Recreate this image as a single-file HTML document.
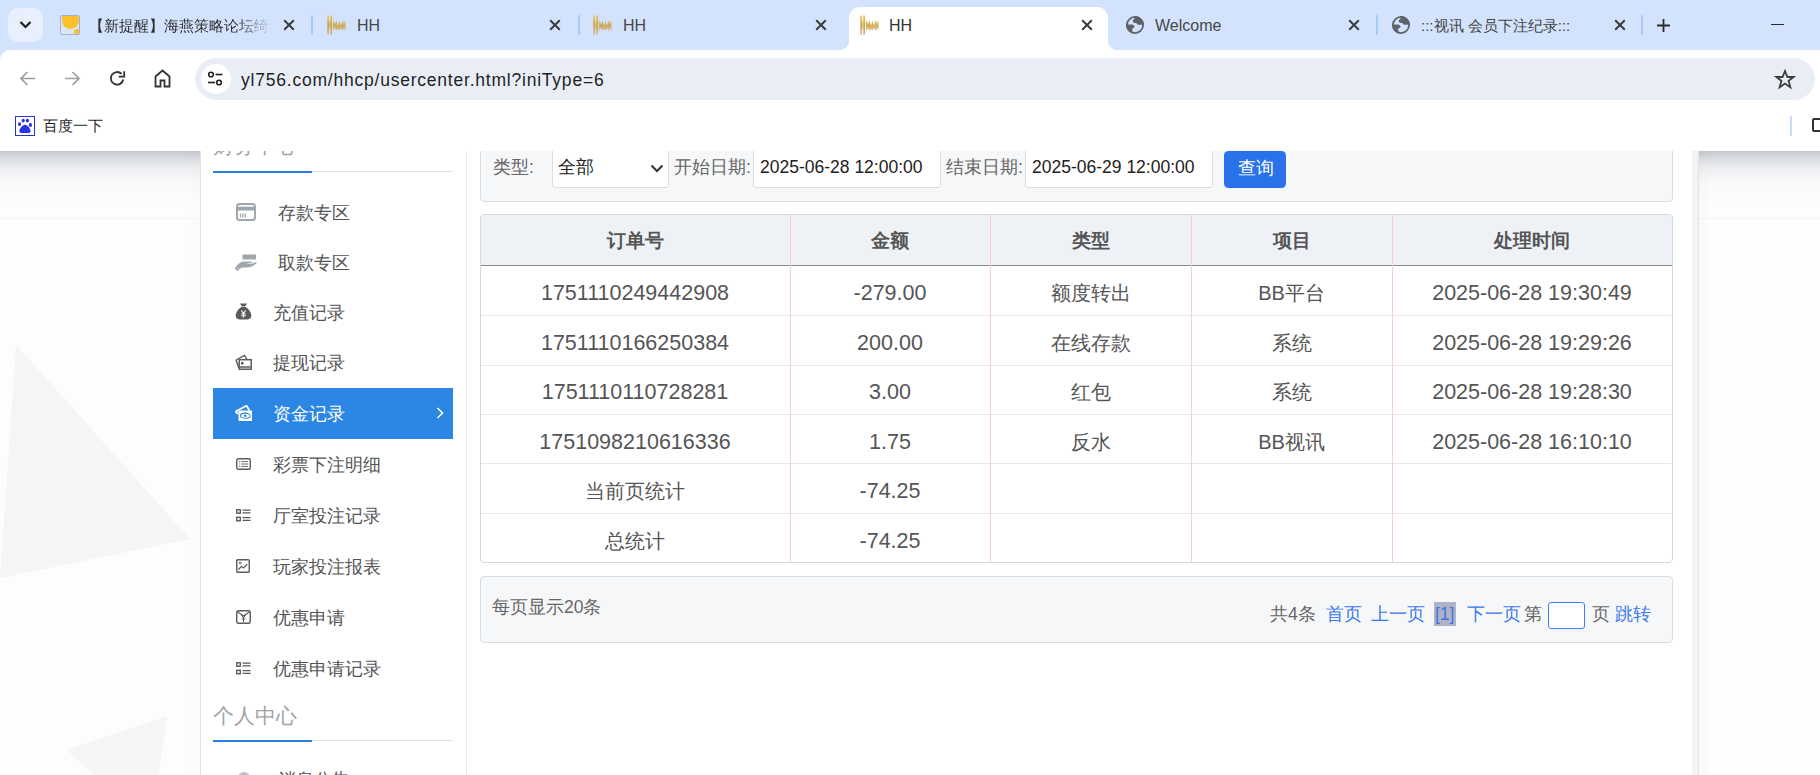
<!DOCTYPE html>
<html><head><meta charset="utf-8">
<style>
*{box-sizing:border-box;margin:0;padding:0}
html,body{width:1820px;height:775px;overflow:hidden;background:#fff;font-family:"Liberation Sans",sans-serif}
.abs{position:absolute}
#tabs{position:absolute;left:0;top:0;width:1820px;height:60px;background:#d3e3fd}
.tsep{position:absolute;top:15px;width:2px;height:20px;background:#a8c7fa;border-radius:1px}
.ttl{position:absolute;top:15.5px;font-size:16px;line-height:20px;color:#474747;white-space:nowrap}
.tx{position:absolute;top:19px;width:12px;height:12px}
#toolbar{position:absolute;left:0;top:50px;width:1820px;height:58px;background:#fff;border-top-left-radius:10px}
#omni{position:absolute;left:195px;top:58px;width:1620px;height:42px;border-radius:21px;background:#e9eef6}
#bm{position:absolute;left:0;top:108px;width:1820px;height:43px;background:#fff}
#page{position:absolute;left:0;top:151px;width:1820px;height:624px;background:#fdfdfd;overflow:hidden}
#main{position:absolute;left:200px;top:0;width:1499px;height:625px;background:#fff;border-left:1px solid #e2e2e2;border-right:1px solid #e2e2e2}
.mi{position:absolute;left:213px;width:240px;height:51px;font-size:17.5px;color:#555}
.mi span{position:absolute;top:0;line-height:51px;white-space:nowrap}
.panel{position:absolute;left:480px;width:1193px;background:#f6f7f9;border:1px solid #d9dde2;border-radius:4px}
.lbl{position:absolute;font-size:17.5px;color:#666;line-height:20px;white-space:nowrap}
.inp{position:absolute;background:#fff;border:1px solid #dadde1;border-radius:3px}
table{border-collapse:collapse}
#tbl{position:absolute;left:480px;top:214px;width:1192px;height:348px;border:1px solid #d6dadf;border-radius:4px;overflow:hidden;background:#fff}
.row{position:absolute;left:0;width:1190px;border-top:1px solid #ebebeb}
.cell{position:absolute;top:0;text-align:center;font-size:20px;color:#555;white-space:nowrap}
.vl{position:absolute;top:0;width:1px;height:348px;background:#f3cfd3}
.lk{color:#3a78e8}
.mt{font-size:17.5px;line-height:22px;color:#555;white-space:nowrap}
.th{position:absolute;text-align:center;font-size:19px;line-height:24px;font-weight:bold;color:#555;white-space:nowrap}
.td{position:absolute;text-align:center;font-size:21.5px;line-height:25px;margin-top:3.5px;color:#555;white-space:nowrap}
.cj{font-size:20px}
</style></head><body>

<!-- TAB STRIP -->
<div id="tabs">
  <div class="abs" style="left:8px;top:8px;width:35px;height:34px;border-radius:10px;background:#e9f0fd"></div>
  <svg class="abs" style="left:19px;top:20px" width="13" height="10" viewBox="0 0 13 10"><path d="M1.5 2 L6.5 7 L11.5 2" fill="none" stroke="#1f1f1f" stroke-width="2.2"/></svg>

  <div class="abs" style="left:60px;top:15px;width:20px;height:20px;border:1px solid #9fb3cf;border-radius:2px;background:#dde6f2;overflow:hidden"><div class="abs" style="left:1px;top:0;width:17px;height:13px;border-radius:0 0 9px 9px;background:#fbc02d"></div><div class="abs" style="left:13px;top:13px;width:6px;height:6px;border-radius:3px;background:#fbc02d"></div></div>
  <div class="ttl" style="left:89px;width:183px;font-size:15px;overflow:hidden;color:#303030;-webkit-mask-image:linear-gradient(90deg,#000 80%,transparent 100%)">【新提醒】海燕策略论坛绮丽</div>
  <svg class="abs" style="left:283px;top:19px" width="12" height="12" viewBox="0 0 12 12"><path d="M1.2 1.2L10.8 10.8M10.8 1.2L1.2 10.8" stroke="#3c3c3c" stroke-width="2"/></svg>
  <div class="tsep" style="left:311px"></div>
  <svg class="abs" style="left:327px;top:15px" width="20" height="20" viewBox="0 0 20 20"><defs><linearGradient id="gw" x1="0" y1="0" x2="0" y2="1"><stop offset="0" stop-color="#e8c766"/><stop offset="0.5" stop-color="#c9a03a"/><stop offset="1" stop-color="#d8b58a"/></linearGradient></defs><g fill="url(#gw)"><rect x="0.3" y="0.5" width="1.6" height="19"/><rect x="3.3" y="0.5" width="1.8" height="19"/><path d="M2 6L3.3 5V15L2 14Z" opacity="0.6"/><path d="M6 4.5L8 9L9.5 5L11 11L12.5 5.5L14 11L15.5 4.5L17 9L18.5 4V16L17 13L15.5 16L14 13L12.5 15.5L11 14L9.5 15.5L8 13L6 16Z" opacity="0.85"/></g></svg>
  <div class="ttl" style="left:357px">HH</div>
  <svg class="abs" style="left:549px;top:19px" width="12" height="12" viewBox="0 0 12 12"><path d="M1.2 1.2L10.8 10.8M10.8 1.2L1.2 10.8" stroke="#3c3c3c" stroke-width="2"/></svg>
  <div class="tsep" style="left:578px"></div>
  <svg class="abs" style="left:593px;top:15px" width="20" height="20" viewBox="0 0 20 20"><defs><linearGradient id="gw" x1="0" y1="0" x2="0" y2="1"><stop offset="0" stop-color="#e8c766"/><stop offset="0.5" stop-color="#c9a03a"/><stop offset="1" stop-color="#d8b58a"/></linearGradient></defs><g fill="url(#gw)"><rect x="0.3" y="0.5" width="1.6" height="19"/><rect x="3.3" y="0.5" width="1.8" height="19"/><path d="M2 6L3.3 5V15L2 14Z" opacity="0.6"/><path d="M6 4.5L8 9L9.5 5L11 11L12.5 5.5L14 11L15.5 4.5L17 9L18.5 4V16L17 13L15.5 16L14 13L12.5 15.5L11 14L9.5 15.5L8 13L6 16Z" opacity="0.85"/></g></svg>
  <div class="ttl" style="left:623px">HH</div>
  <svg class="abs" style="left:815px;top:19px" width="12" height="12" viewBox="0 0 12 12"><path d="M1.2 1.2L10.8 10.8M10.8 1.2L1.2 10.8" stroke="#3c3c3c" stroke-width="2"/></svg>
  <!-- active tab -->
  <div class="abs" style="left:849px;top:7px;width:259px;height:43px;background:#fff;border-radius:11px 11px 0 0"></div>
  <div class="abs" style="left:839px;top:40px;width:10px;height:10px;background:radial-gradient(circle at 0 0,transparent 10px,#fff 10.5px)"></div>
  <div class="abs" style="left:1108px;top:40px;width:10px;height:10px;background:radial-gradient(circle at 100% 0,transparent 10px,#fff 10.5px)"></div>
  <svg class="abs" style="left:860px;top:15px" width="20" height="20" viewBox="0 0 20 20"><defs><linearGradient id="gw" x1="0" y1="0" x2="0" y2="1"><stop offset="0" stop-color="#e8c766"/><stop offset="0.5" stop-color="#c9a03a"/><stop offset="1" stop-color="#d8b58a"/></linearGradient></defs><g fill="url(#gw)"><rect x="0.3" y="0.5" width="1.6" height="19"/><rect x="3.3" y="0.5" width="1.8" height="19"/><path d="M2 6L3.3 5V15L2 14Z" opacity="0.6"/><path d="M6 4.5L8 9L9.5 5L11 11L12.5 5.5L14 11L15.5 4.5L17 9L18.5 4V16L17 13L15.5 16L14 13L12.5 15.5L11 14L9.5 15.5L8 13L6 16Z" opacity="0.85"/></g></svg>
  <div class="ttl" style="left:889px;color:#333">HH</div>
  <svg class="abs" style="left:1081px;top:19px" width="12" height="12" viewBox="0 0 12 12"><path d="M1.2 1.2L10.8 10.8M10.8 1.2L1.2 10.8" stroke="#3c3c3c" stroke-width="2"/></svg>
  <svg class="abs" style="left:1125px;top:15px" width="20" height="20" viewBox="0 0 20 20"><circle cx="10" cy="10" r="8.1" fill="none" stroke="#5f6368" stroke-width="1.8"/><path d="M9.5 1.1A9 9 0 0 1 18.9 9.2L16 9.7L13 9.7L11.5 8.2L8.2 7.5L7.6 5.5L9.5 3.5Z" fill="#5f6368"/><path d="M1.05 9.5A9 9 0 0 0 7.8 18.75L7.3 16L7.3 13.5L9.3 12.5L9.5 11L7.5 9.6Z" fill="#5f6368"/></svg>
  <div class="ttl" style="left:1155px">Welcome</div>
  <svg class="abs" style="left:1348px;top:19px" width="12" height="12" viewBox="0 0 12 12"><path d="M1.2 1.2L10.8 10.8M10.8 1.2L1.2 10.8" stroke="#3c3c3c" stroke-width="2"/></svg>
  <div class="tsep" style="left:1376px"></div>
  <svg class="abs" style="left:1391px;top:15px" width="20" height="20" viewBox="0 0 20 20"><circle cx="10" cy="10" r="8.1" fill="none" stroke="#5f6368" stroke-width="1.8"/><path d="M9.5 1.1A9 9 0 0 1 18.9 9.2L16 9.7L13 9.7L11.5 8.2L8.2 7.5L7.6 5.5L9.5 3.5Z" fill="#5f6368"/><path d="M1.05 9.5A9 9 0 0 0 7.8 18.75L7.3 16L7.3 13.5L9.3 12.5L9.5 11L7.5 9.6Z" fill="#5f6368"/></svg>
  <div class="ttl" style="left:1421px;font-size:15px;color:#444">:::视讯 会员下注纪录:::</div>
  <svg class="abs" style="left:1614px;top:19px" width="12" height="12" viewBox="0 0 12 12"><path d="M1.2 1.2L10.8 10.8M10.8 1.2L1.2 10.8" stroke="#3c3c3c" stroke-width="2"/></svg>
  <div class="tsep" style="left:1641px"></div>
  <svg class="abs" style="left:1656px;top:18px" width="15" height="15" viewBox="0 0 15 15"><path d="M7.5 1V14M1 7.5H14" stroke="#2a2a2a" stroke-width="1.8"/></svg>
  <div class="abs" style="left:1771px;top:24px;width:13px;height:1.3px;background:#2a2a2a"></div>
</div>

<!-- TOOLBAR -->
<div id="toolbar"></div>
<svg class="abs" style="left:19px;top:70px" width="17" height="17" viewBox="0 0 17 17"><path d="M16 8.5H2M8.5 2L2 8.5L8.5 15" fill="none" stroke="#9e9e9e" stroke-width="1.7"/></svg>
<svg class="abs" style="left:64px;top:70px" width="17" height="17" viewBox="0 0 17 17"><path d="M1 8.5H15M8.5 2L15 8.5L8.5 15" fill="none" stroke="#9e9e9e" stroke-width="1.7"/></svg>
<svg class="abs" style="left:109px;top:70px" width="17" height="17" viewBox="0 0 17 17"><path d="M14.3 9.5A6.3 6.3 0 1 1 12.6 3.9" fill="none" stroke="#333" stroke-width="1.8"/><path d="M15.2 1.2V6.6H9.8" fill="none" stroke="#333" stroke-width="1.8"/></svg>
<svg class="abs" style="left:154px;top:69px" width="17" height="19" viewBox="0 0 17 19"><path d="M1.5 17.5V7.5L8.5 1.5L15.5 7.5V17.5H10.5V11.5H6.5V17.5Z" fill="none" stroke="#333" stroke-width="1.8" stroke-linejoin="miter"/></svg>
<div id="omni"></div>
<div class="abs" style="left:201px;top:64px;width:30px;height:30px;border-radius:15px;background:#fff"></div>
<svg class="abs" style="left:207px;top:71px" width="18" height="16" viewBox="0 0 18 16"><circle cx="4" cy="3.5" r="2.3" fill="none" stroke="#1f1f1f" stroke-width="1.6"/><path d="M8.5 3.5H15.5" stroke="#1f1f1f" stroke-width="1.6"/><circle cx="12" cy="11.5" r="2.3" fill="none" stroke="#1f1f1f" stroke-width="1.6"/><path d="M1 11.5H8" stroke="#1f1f1f" stroke-width="1.6"/></svg>
<div class="abs" style="left:241px;top:69px;font-size:17.5px;line-height:22px;color:#1f1f1f;letter-spacing:0.78px;white-space:nowrap">yl756.com/hhcp/usercenter.html?iniType=6</div>
<svg class="abs" style="left:1774px;top:69px" width="22" height="21" viewBox="0 0 22 21"><path d="M11 2L13.4 8H19.6L14.6 11.9L16.4 18.4L11 14.6L5.6 18.4L7.4 11.9L2.4 8H8.6Z" fill="none" stroke="#3c3c3c" stroke-width="1.8" stroke-linejoin="miter"/></svg>
<div id="bm"></div>
<div class="abs" style="left:15px;top:116px;width:20px;height:20px;border:1.4px solid #2932e1;background:#fff"></div>
<svg class="abs" style="left:15px;top:116px" width="20" height="20" viewBox="0 0 20 20"><g fill="#2932e1"><ellipse cx="4.6" cy="8.1" rx="1.6" ry="1.9"/><ellipse cx="8.2" cy="4.6" rx="1.6" ry="1.9"/><ellipse cx="12.4" cy="4.6" rx="1.6" ry="1.9"/><ellipse cx="15.4" cy="9" rx="1.6" ry="1.9"/><path d="M10 8.8C12.5 8.8 16 13 15.6 15.6C15.2 17.6 12.5 17 10 17C7.5 17 4.8 17.6 4.4 15.6C4 13 7.5 8.8 10 8.8Z"/></g></svg>
<div class="abs" style="left:43px;top:116px;font-size:15px;line-height:20px;color:#1f1f1f;white-space:nowrap">百度一下</div>
<div class="abs" style="left:1790px;top:116px;width:2px;height:20px;background:#c7dafc;border-radius:1px"></div>
<div class="abs" style="left:1812px;top:118px;width:14px;height:14px;border:2px solid #333;border-radius:2px"></div>

<!-- PAGE -->
<div id="page">
  <div class="abs" style="left:0;top:0;width:1820px;height:50px;background:linear-gradient(180deg,#c3c6ce 0%,#d3d6dc 10%,#e5e7ea 25%,#f1f2f4 42%,#f9f9fa 62%,#fcfcfc 100%)"></div>
  <div class="abs" style="left:0;top:67px;width:1820px;height:1px;background:#f5f5f5"></div>
  <svg class="abs" style="left:0;top:0" width="200" height="625" viewBox="0 0 200 625"><path d="M16 194L190 388L0 427Z" fill="#f5f5f5"/><path d="M167 565L67 599L151 678Z" fill="#f5f5f5"/></svg>
  <div class="abs" style="left:188px;top:0;width:12px;height:625px;background:linear-gradient(90deg,rgba(0,0,0,0),rgba(0,0,0,0.012))"></div>
  <div class="abs" style="left:1699px;top:0;width:12px;height:625px;background:linear-gradient(270deg,rgba(0,0,0,0),rgba(0,0,0,0.015))"></div>
  <div id="main">
    <div class="abs" style="left:1491px;top:0;width:6px;height:625px;background:#f3f3f3"></div>
  </div>
</div>

<div class="abs" style="left:0;top:151px;width:1820px;height:624px;overflow:hidden"><div class="abs" style="left:0;top:-151px;width:1820px;height:775px">
<!-- SIDEBAR -->
<div class="abs" style="left:466px;top:150px;width:1px;height:625px;background:#e6e6e6"></div>
<div class="abs" style="left:213px;top:134px;font-size:21px;line-height:24px;color:#9fa3a8;white-space:nowrap">财务中心</div>
<div class="abs" style="left:213px;top:171px;width:240px;height:1px;background:#e3e3e3"></div>
<div class="abs" style="left:213px;top:170.8px;width:99px;height:2.4px;background:#2b7ee0"></div>

<svg class="abs" style="left:236px;top:203px" width="20" height="18" viewBox="0 0 20 18"><rect x="1" y="1" width="18" height="16" rx="2.5" fill="none" stroke="#9ea6ae" stroke-width="2"/><path d="M1 5.6H19" stroke="#9ea6ae" stroke-width="3.8"/><path d="M4.5 10.5V14.5M6.9 10.5V14.5M9.3 10.5V14.5" stroke="#9ea6ae" stroke-width="1.3"/></svg>
<div class="abs mt" style="left:278px;top:202px">存款专区</div>

<svg class="abs" style="left:235px;top:254px" width="23" height="17" viewBox="0 0 23 17"><rect x="7.5" y="0.5" width="13.5" height="5" fill="#9ea6ae"/><path d="M1 12.5C3 9.5 6 7.5 9 7.5H16C17 7.5 17 9.2 16 9.2H11.5C13 10.2 16 10.2 18.5 9C20 8.3 21.5 7.8 22 8.5C20 10.8 16.5 13.5 12.5 13.5H8C6.5 13.5 5 14.5 4 15.5Z" fill="#9ea6ae"/><path d="M0.2 13.5L3.2 16.5" stroke="#9ea6ae" stroke-width="2"/></svg>
<div class="abs mt" style="left:278px;top:252px">取款专区</div>

<svg class="abs" style="left:235px;top:303px" width="17" height="17" viewBox="0 0 17 17"><path d="M5 0.5H12L10.3 3.2H6.7Z" fill="#5b5b5b"/><path d="M6.7 3.8H10.3C13 5.5 16.3 9 16.3 12.8C16.3 15.5 14.5 16.5 12 16.5H5C2.5 16.5 0.7 15.5 0.7 12.8C0.7 9 4 5.5 6.7 3.8Z" fill="#5b5b5b"/><path d="M6.3 7.5L8.5 10.3L10.7 7.5M8.5 10.3V14.5M6.3 11H10.7M6.3 12.8H10.7" fill="none" stroke="#fff" stroke-width="1.1"/></svg>
<div class="abs mt" style="left:273px;top:302px">充值记录</div>

<svg class="abs" style="left:235px;top:354px" width="17" height="16" viewBox="0 0 17 16"><path d="M1 6L9.5 1.5L12 5.5" fill="none" stroke="#5b5b5b" stroke-width="1.4"/><path d="M1 6L3.8 14" fill="none" stroke="#5b5b5b" stroke-width="1.4"/><rect x="4.2" y="5.7" width="12" height="9.5" fill="#fff" stroke="#5b5b5b" stroke-width="1.5"/><rect x="6" y="8" width="2.5" height="2.5" fill="#5b5b5b"/><path d="M5 13H15.5" stroke="#5b5b5b" stroke-width="1.5"/></svg>
<div class="abs mt" style="left:273px;top:352px">提现记录</div>

<div class="abs" style="left:213px;top:388px;width:240px;height:51px;background:#2c86e3"></div>
<svg class="abs" style="left:235px;top:405px" width="18" height="17" viewBox="0 0 18 17"><path d="M0.5 6.5L11.5 0.8L14.5 5.5" fill="none" stroke="#fff" stroke-width="1.8"/><path d="M0.5 6.5L3 9" stroke="#fff" stroke-width="1.8"/><rect x="3.5" y="5.5" width="13.5" height="10.5" fill="#fff"/><ellipse cx="10.2" cy="10.7" rx="4.8" ry="2.6" fill="none" stroke="#2c86e3" stroke-width="1.1"/><circle cx="10.2" cy="10.7" r="1.3" fill="#2c86e3"/></svg>
<div class="abs mt" style="left:273px;top:403px;color:#fff">资金记录</div>
<svg class="abs" style="left:436px;top:407px" width="8" height="12" viewBox="0 0 8 12"><path d="M1.5 1L6.5 6L1.5 11" fill="none" stroke="#fff" stroke-width="1.6"/></svg>

<svg class="abs" style="left:236px;top:458px" width="15" height="12" viewBox="0 0 15 12"><rect x="0.75" y="0.75" width="13.5" height="10.5" rx="1.5" fill="none" stroke="#5b5b5b" stroke-width="1.4"/><path d="M3 3.6H4M3 6H4M3 8.4H4M5.3 3.6H12.2M5.3 6H12.2M5.3 8.4H12.2" stroke="#5b5b5b" stroke-width="0.9"/></svg>
<div class="abs mt" style="left:273px;top:454px">彩票下注明细</div>

<svg class="abs" style="left:236px;top:509px" width="15" height="13" viewBox="0 0 15 13"><rect x="0.75" y="0.75" width="3.5" height="3.5" fill="none" stroke="#5b5b5b" stroke-width="1.4"/><rect x="0.75" y="8.25" width="3.5" height="3.5" fill="none" stroke="#5b5b5b" stroke-width="1.4"/><path d="M6.5 1.2H14.5M6.5 3.8H14.5M6.5 8.7H14.5M6.5 11.3H14.5" stroke="#5b5b5b" stroke-width="1.2"/></svg>
<div class="abs mt" style="left:273px;top:505px">厅室投注记录</div>

<svg class="abs" style="left:236px;top:559px" width="14" height="14" viewBox="0 0 14 14"><rect x="0.75" y="0.75" width="12.5" height="12.5" rx="1" fill="none" stroke="#5b5b5b" stroke-width="1.4"/><circle cx="4.2" cy="4" r="1" fill="none" stroke="#5b5b5b" stroke-width="0.9"/><path d="M2.5 10.5L5.5 7.3L7.5 9L11.3 5.3" fill="none" stroke="#5b5b5b" stroke-width="1.2"/></svg>
<div class="abs mt" style="left:273px;top:556px">玩家投注报表</div>

<svg class="abs" style="left:236px;top:610px" width="15" height="14" viewBox="0 0 15 14"><rect x="0.75" y="0.75" width="13.5" height="12.5" rx="1.5" fill="none" stroke="#5b5b5b" stroke-width="1.4"/><path d="M1 1.5L7.5 6L14 1.5" fill="none" stroke="#5b5b5b" stroke-width="1.2"/><path d="M5.5 5L7.5 8L9.5 5M7.5 8V12M5.5 9H9.5" fill="none" stroke="#5b5b5b" stroke-width="1"/></svg>
<div class="abs mt" style="left:273px;top:607px">优惠申请</div>

<svg class="abs" style="left:236px;top:662px" width="15" height="13" viewBox="0 0 15 13"><rect x="0.75" y="0.75" width="3.5" height="3.5" fill="none" stroke="#5b5b5b" stroke-width="1.4"/><rect x="0.75" y="8.25" width="3.5" height="3.5" fill="none" stroke="#5b5b5b" stroke-width="1.4"/><path d="M6.5 1.2H14.5M6.5 3.8H14.5M6.5 8.7H14.5M6.5 11.3H14.5" stroke="#5b5b5b" stroke-width="1.2"/></svg>
<div class="abs mt" style="left:273px;top:658px">优惠申请记录</div>

<div class="abs" style="left:213px;top:704px;font-size:21px;line-height:24px;color:#9fa3a8;white-space:nowrap">个人中心</div>
<div class="abs" style="left:213px;top:740px;width:240px;height:1px;background:#e3e3e3"></div>
<div class="abs" style="left:213px;top:739.8px;width:99px;height:2.4px;background:#2b7ee0"></div>
<div class="abs" style="left:238px;top:771.5px;width:12px;height:12px;border-radius:6px;background:#bcc2c9"></div>
<div class="abs mt" style="left:278px;top:769px">消息公告</div>

<!-- FILTER -->
<div class="panel" style="top:110px;height:92px"></div>
<div class="lbl" style="left:493px;top:157px">类型:</div>
<div class="inp" style="left:552px;top:148px;width:117px;height:40px"></div>
<div class="abs" style="left:558px;top:157px;font-size:17.5px;line-height:20px;color:#222;white-space:nowrap">全部</div>
<svg class="abs" style="left:650px;top:164px" width="14" height="9" viewBox="0 0 14 9"><path d="M1.5 1.5L7 7L12.5 1.5" fill="none" stroke="#333" stroke-width="2"/></svg>
<div class="lbl" style="left:674px;top:157px">开始日期:</div>
<div class="inp" style="left:753px;top:148px;width:188px;height:40px"></div>
<div class="abs" style="left:760px;top:157px;font-size:17.5px;line-height:20px;color:#222;white-space:nowrap">2025-06-28 12:00:00</div>
<div class="lbl" style="left:946px;top:157px">结束日期:</div>
<div class="inp" style="left:1025px;top:148px;width:188px;height:40px"></div>
<div class="abs" style="left:1032px;top:157px;font-size:17.5px;line-height:20px;color:#222;white-space:nowrap">2025-06-29 12:00:00</div>
<div class="abs" style="left:1224px;top:150.5px;width:62px;height:37.5px;background:#2a72ea;border-radius:4.5px"></div>
<div class="abs" style="left:1238px;top:158px;font-size:17.5px;line-height:20px;color:#fff;white-space:nowrap">查询</div>
<!-- TABLE -->
<div class="abs" style="left:480px;top:214px;width:1193px;height:349px;border:1px solid #d5d9de;border-radius:4px;background:#fff;overflow:hidden">
  <div class="abs" style="left:0;top:0;width:1191px;height:51px;background:#eef2f6;border-bottom:1.5px solid #8a8a8a"></div>
  <div class="abs" style="left:0;top:100px;width:1190px;height:1px;background:#e9e9e9"></div>
  <div class="abs" style="left:0;top:149.5px;width:1190px;height:1px;background:#e9e9e9"></div>
  <div class="abs" style="left:0;top:199px;width:1190px;height:1px;background:#e9e9e9"></div>
  <div class="abs" style="left:0;top:248px;width:1190px;height:1px;background:#e9e9e9"></div>
  <div class="abs" style="left:0;top:298px;width:1190px;height:1px;background:#e9e9e9"></div>
  <div class="abs" style="left:309px;top:0;width:1px;height:349px;background:#f4cfd3"></div>
  <div class="abs" style="left:509px;top:0;width:1px;height:349px;background:#f4cfd3"></div>
  <div class="abs" style="left:710px;top:0;width:1px;height:349px;background:#f4cfd3"></div>
  <div class="abs" style="left:911px;top:0;width:1px;height:349px;background:#f4cfd3"></div>
</div>
<div class="th" style="left:480px;width:310px;top:229px">订单号</div>
<div class="th" style="left:790px;width:200px;top:229px">金额</div>
<div class="th" style="left:990px;width:201px;top:229px">类型</div>
<div class="th" style="left:1191px;width:201px;top:229px">项目</div>
<div class="th" style="left:1392px;width:280px;top:229px">处理时间</div>
<div class="td" style="left:480px;width:310px;top:277.75px">1751110249442908</div>
<div class="td" style="left:790px;width:200px;top:277.75px">-279.00</div>
<div class="td cj" style="left:990px;width:201px;top:277.75px">额度转出</div>
<div class="td cj" style="left:1191px;width:201px;top:277.75px">BB平台</div>
<div class="td" style="left:1392px;width:280px;top:277.75px">2025-06-28 19:30:49</div>
<div class="td" style="left:480px;width:310px;top:327.25px">1751110166250384</div>
<div class="td" style="left:790px;width:200px;top:327.25px">200.00</div>
<div class="td cj" style="left:990px;width:201px;top:327.25px">在线存款</div>
<div class="td cj" style="left:1191px;width:201px;top:327.25px">系统</div>
<div class="td" style="left:1392px;width:280px;top:327.25px">2025-06-28 19:29:26</div>
<div class="td" style="left:480px;width:310px;top:376.75px">1751110110728281</div>
<div class="td" style="left:790px;width:200px;top:376.75px">3.00</div>
<div class="td cj" style="left:990px;width:201px;top:376.75px">红包</div>
<div class="td cj" style="left:1191px;width:201px;top:376.75px">系统</div>
<div class="td" style="left:1392px;width:280px;top:376.75px">2025-06-28 19:28:30</div>
<div class="td" style="left:480px;width:310px;top:426.0px">1751098210616336</div>
<div class="td" style="left:790px;width:200px;top:426.0px">1.75</div>
<div class="td cj" style="left:990px;width:201px;top:426.0px">反水</div>
<div class="td cj" style="left:1191px;width:201px;top:426.0px">BB视讯</div>
<div class="td" style="left:1392px;width:280px;top:426.0px">2025-06-28 16:10:10</div>
<div class="td cj" style="left:480px;width:310px;top:475.5px">当前页统计</div>
<div class="td" style="left:790px;width:200px;top:475.5px">-74.25</div>
<div class="td cj" style="left:480px;width:310px;top:525.0px">总统计</div>
<div class="td" style="left:790px;width:200px;top:525.0px">-74.25</div>
<!-- PAGINATION -->
<div class="panel" style="top:576px;height:67px"></div>
<div class="lbl" style="left:492px;top:597px">每页显示20条</div>
<div class="abs" style="left:1434px;top:602px;width:22px;height:24px;background:#b1b2c6"></div>
<div class="abs lk" style="left:1435px;top:604px;font-size:17.5px;line-height:20px;white-space:nowrap">[1]</div>
<div class="abs" style="left:1270px;top:604px;font-size:17.5px;line-height:20px;color:#666;white-space:nowrap">共4条</div>
<div class="abs lk" style="left:1326px;top:604px;font-size:17.5px;line-height:20px;white-space:nowrap">首页</div>
<div class="abs lk" style="left:1371px;top:604px;font-size:17.5px;line-height:20px;white-space:nowrap">上一页</div>
<div class="abs lk" style="left:1467px;top:604px;font-size:17.5px;line-height:20px;white-space:nowrap">下一页</div>
<div class="abs" style="left:1524px;top:604px;font-size:17.5px;line-height:20px;color:#666;white-space:nowrap">第</div>
<div class="abs" style="left:1592px;top:604px;font-size:17.5px;line-height:20px;color:#666;white-space:nowrap">页</div>
<div class="abs lk" style="left:1615px;top:604px;font-size:17.5px;line-height:20px;white-space:nowrap">跳转</div>
<div class="abs" style="left:1548px;top:602px;width:37px;height:27px;background:#fff;border:1.5px solid #3d7ef0;border-radius:3px"></div>
<!-- END -->
</div></div>
</body></html>
